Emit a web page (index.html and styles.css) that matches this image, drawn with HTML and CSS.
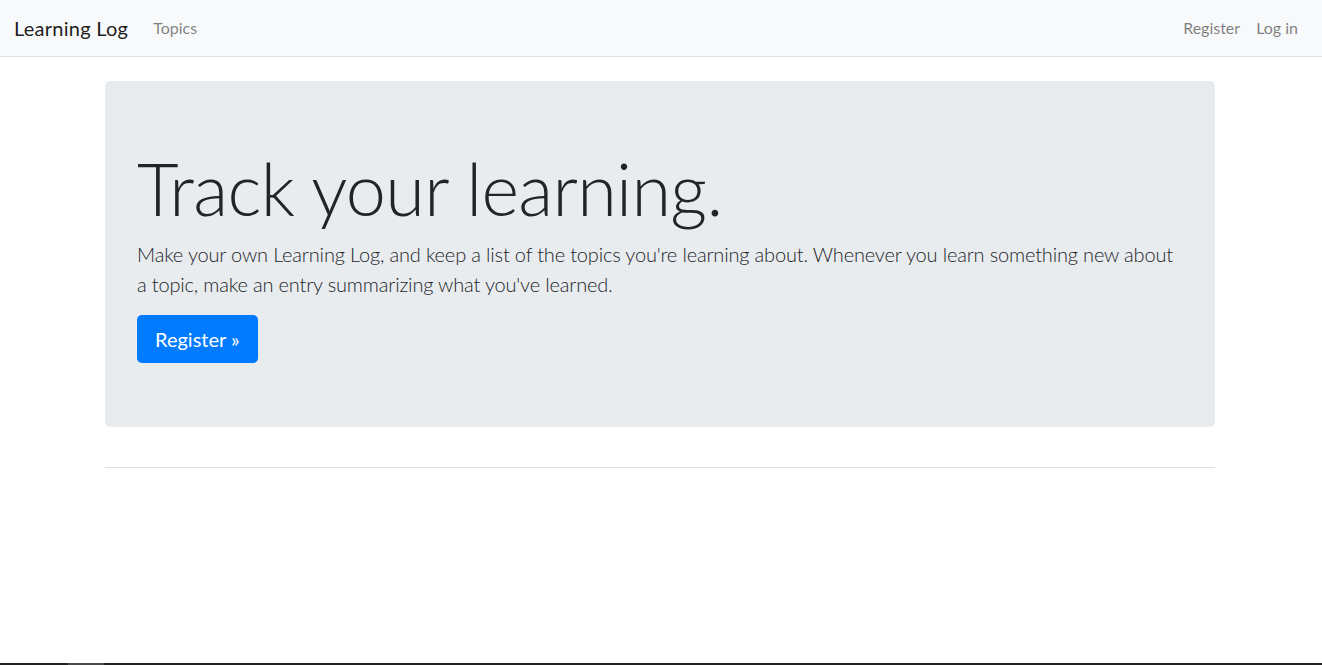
FILE: index.html
```html
<!DOCTYPE html>
<html lang="en">
<head>
<meta charset="utf-8">
<title>Learning Log</title>
<link rel="stylesheet" href="styles.css">
</head>
<body>
<nav class="navbar">
  <a class="brand" href="#">Learning Log</a>
  <ul class="nav">
    <li><a class="nav-link" href="#">Topics</a></li>
  </ul>
  <ul class="nav nav-right">
    <li><a class="nav-link" href="#">Register</a></li>
    <li><a class="nav-link" href="#">Log in</a></li>
  </ul>
</nav>
<main class="container">
  <div class="page-header">
    <div class="jumbotron">
      <h1 class="display">Track your learning.</h1>
      <p class="lead">Make your own Learning Log, and keep a list of the topics you're learning about. Whenever you learn something new about a topic, make an entry summarizing what you've learned.</p>
      <a class="btn" href="#">Register &raquo;</a>
    </div>
  </div>
  <div class="content"></div>
</main>
<div class="screen-edge"><span class="edge-mark"></span></div>
</body>
</html>
```
FILE: styles.css
```css
* { box-sizing: border-box; }
html, body { margin: 0; padding: 0; }
body {
  font-family: Lato, "Noto Sans", "Liberation Sans", sans-serif;
  font-size: 16px;
  line-height: 1.5;
  color: #212529;
  background: #fff;
}
a { text-decoration: none; }

.navbar {
  display: flex;
  align-items: center;
  height: 57px;
  padding: 8px 16px;
  background: #f8f9fa;
  border-bottom: 1px solid #dee2e6;
  margin-bottom: 24px;
}
.brand {
  font-size: 20px;
  line-height: 30px;
  color: rgba(0,0,0,.9);
  margin-right: 17px;
  margin-left: -2px;
  letter-spacing: 0.25px;
}
.nav {
  display: flex;
  list-style: none;
  margin: 0;
  padding: 0;
}
.nav-right { margin-left: auto; }
.nav-link {
  display: block;
  padding: 8px 8px;
  color: rgba(0,0,0,.5);
  font-size: 16px;
}

.container {
  width: 1110px;
  margin: 0 auto;
  position: relative;
  left: -1px;
}
.page-header {
  padding-bottom: 8px;
  margin-bottom: 8px;
  border-bottom: 1px solid #dee2e6;
}
.jumbotron {
  background: #e9ecef;
  border-radius: 4.8px;
  padding: 64px 32px;
  margin-bottom: 32px;
  height: 346px;
}
.display {
  font-size: 72px;
  font-weight: 300;
  line-height: 1.2;
  margin: 0 0 8px;
  letter-spacing: -0.7px;
}
.lead {
  font-size: 20px;
  font-weight: 300;
  line-height: 30px;
  margin: 0 0 16px;
  color: #212529;
  letter-spacing: -0.17px;
}
.btn {
  display: inline-block;
  background: #007bff;
  color: #fff;
  font-size: 20px;
  line-height: 30px;
  padding: 9px 18px;
  border-radius: 4.8px;
  height: 48px;
}

.screen-edge {
  position: fixed;
  left: 0;
  right: 0;
  bottom: 0;
  height: 2px;
  background: #222;
}
.edge-mark {
  position: absolute;
  left: 68px;
  width: 36px;
  top: 0;
  bottom: 0;
  background: #4a4a4a;
}
```
